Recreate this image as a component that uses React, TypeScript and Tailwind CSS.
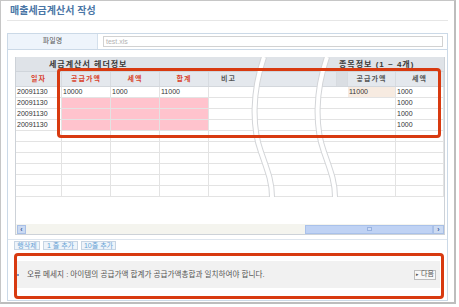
const font = { fontFamily: '"Liberation Sans", "Noto Sans CJK KR", sans-serif' };

const cols = [46, 49, 49, 49, 128, 11, 48, 48];
const heads = ["일자", "공급가액", "세액", "합계", "비고", "", "공급가액", "세액"];

type Row = { cells: string[]; pink?: boolean; beige?: boolean };

const rows: Row[] = [
  { cells: ["20091130", "10000", "1000", "11000", "", "", "11000", "1000"], beige: true },
  { cells: ["20091130", "", "", "", "", "", "", "1000"], pink: true },
  { cells: ["20091130", "", "", "", "", "", "", "1000"], pink: true },
  { cells: ["20091130", "", "", "", "", "", "", "1000"], pink: true },
  ...Array.from({ length: 6 }, () => ({ cells: ["", "", "", "", "", "", "", ""] })),
];

const cellBg = (row: Row, i: number) => {
  if (row.pink && i >= 1 && i <= 3) return "bg-[#ffc3cd]";
  if (row.beige && i === 6) return "bg-[#f7ebe1]";
  return "bg-white";
};

const Grid = () => (
  <div className="relative w-[430px] h-[178px] border-x border-b border-[#cdd2d8] bg-white">
    {/* header 1 */}
    <div className="flex h-[15px] bg-[#dfe3e8] border-b border-[#d0d5db] text-[8px] font-bold text-[#3a3a3a] tracking-[1px] leading-[15px]">
      <div className="w-[322px] pl-[33px]">세금계산서 헤더정보</div>
      <div className="flex-1 pl-[1px]">종목정보 (1 ~ 4개)</div>
    </div>
    {/* header 2 */}
    <div className="flex h-[15px] bg-[#e4e8ed] border-b border-[#d3d7dc]">
      {heads.map((h, i) => (
        <div
          key={i}
          style={{ width: cols[i] }}
          className={`flex items-center border-r border-[#d7dbe0] text-[7px] font-bold tracking-[1px] ${
            i === 4 ? "justify-start pl-[12px]" : "justify-center"
          } ${i < 4 ? "text-[#d9412b]" : "text-[#555]"} ${i === 5 ? "bg-[#dadee3]" : ""}`}
        >
          {h}
        </div>
      ))}
    </div>
    {/* rows */}
    {rows.map((row, r) => (
      <div key={r} className="flex h-[11px] border-b border-[#e3e3e3]">
        {row.cells.map((c, i) => (
          <div
            key={i}
            style={{ width: cols[i] }}
            className={`pl-[1px] text-[7px] leading-[10px] text-[#333] ${cellBg(row, i)} ${
              i === 4 || i === 5 ? "" : "border-r border-[#e3e3e3]"
            }`}
          >
            {c}
          </div>
        ))}
      </div>
    ))}
    <div className="h-[27px]" />
    {/* horizontal scrollbar */}
    <div className="flex h-[10px] bg-[#f4f4ee] items-center">
      <div className="ml-[1px] w-[9px] h-[9px] bg-[#cbdaf2] border border-[#a8bfe6] text-[7px] leading-[7px] text-[#3b5e9a] font-bold flex items-center justify-center">
        ‹
      </div>
      <div className="flex-1" />
      <div className="w-[128px] h-[9px] bg-[#bfd2f4] border border-[#a9c1ea] flex items-center justify-center">
        <div className="w-[5px] h-[4px] border border-[#98b2e0] bg-[#cddcf6]" />
      </div>
      <div className="w-[11px] h-[9px] bg-[#cbdaf2] border border-[#a8bfe6] text-[7px] leading-[7px] text-[#3b5e9a] font-bold flex items-center justify-center">
        ›
      </div>
    </div>
    {/* table break marks */}
    <svg className="absolute left-0 top-0" width="430" height="140" viewBox="0 0 430 140" fill="none">
      {[0, 63].map((dx) => (
        <g key={dx} transform={`translate(${dx} 0)`}>
          <path d="M248 0 C 236 35, 236 70, 245 95 C 252 115, 256 125, 256 140" stroke="#d3d5d8" strokeWidth="6" />
          <path d="M248 0 C 236 35, 236 70, 245 95 C 252 115, 256 125, 256 140" stroke="#ffffff" strokeWidth="4" />
        </g>
      ))}
    </svg>
  </div>
);

export default function App() {
  return (
    <div className="relative w-[459px] h-[307px] bg-white overflow-hidden" style={font}>
      <div className="w-[456px] h-[304px] border border-r-2 border-b-2 border-[#c6c6c6] border-r-[#bdbdbd] border-b-[#bdbdbd] bg-white">
        <div className="mx-[6px] h-[20px] border-b border-[#e6e6e6] pl-[3px] flex items-center">
          <span className="text-[10px] font-bold text-[#4a76a6]">매출세금계산서 작성</span>
        </div>
        <div className="mt-[12px] mx-[6px] h-[268px] border border-[#cbd9e7]">
          {/* file row */}
          <div className="flex h-[16px] border-b border-[#cbd9e7]">
            <div className="w-[90px] bg-[#eef4fb] border-r border-[#d4e0ec] flex items-center justify-center text-[7px] text-[#555]">
              파일명
            </div>
            <div className="ml-[5px] mr-[4px] mt-[2px] h-[11px] flex-1 border border-[#d2d2d2] pl-[2px] text-[7px] leading-[9px] text-[#b3b3b3]">
              test.xls
            </div>
          </div>
          {/* grid */}
          <div className="pl-[7px] pt-[7px]">
            <Grid />
          </div>
          <div className="h-[5px] border-b border-[#dde5ee]" />
          {/* buttons */}
          <div className="flex gap-[3px] ml-[6px] mt-[1px]">
            {[
              ["행삭제", "w-[26px]"],
              ["1 줄 추가", "w-[35px]"],
              ["10줄 추가", "w-[35px]"],
            ].map(([t, w]) => (
              <div
                key={t}
                className={`${w} h-[9px] border border-[#c6d4e3] bg-[#eef4fa] text-[7px] leading-[7px] text-[#6aa4d6] flex items-center justify-center`}
              >
                {t}
              </div>
            ))}
          </div>
          {/* message */}
          <div className="mt-[11px] ml-[7px] w-[425px] h-[27px] bg-[#f1f1f1] flex items-center">
            <div className="ml-[2px] w-[2px] h-[2px] bg-[#7b9cc9]" />
            <span className="ml-[8px] text-[7.6px] text-[#555]">
              오류 메세지 : 아이템의 공급가액 합계가 공급가액총합과 일치하여야 합니다.
            </span>
            <div className="ml-auto mr-[4px] w-[22px] h-[10px] border border-[#bdbdbd] bg-[#f8f8f8] flex items-center justify-center gap-[2px] text-[7px] text-[#555]">
              <span className="text-[5px]">▸</span>
              <span>다음</span>
            </div>
          </div>
        </div>
      </div>
      {/* highlight boxes */}
      <div className="absolute left-[57px] top-[68px] w-[384px] h-[70px] border-[3px] border-[#d83a10] rounded-[4px]" />
      <div className="absolute left-[14px] top-[253px] w-[430px] h-[46px] border-[3px] border-[#d83a10] rounded-[4px]" />
    </div>
  );
}
